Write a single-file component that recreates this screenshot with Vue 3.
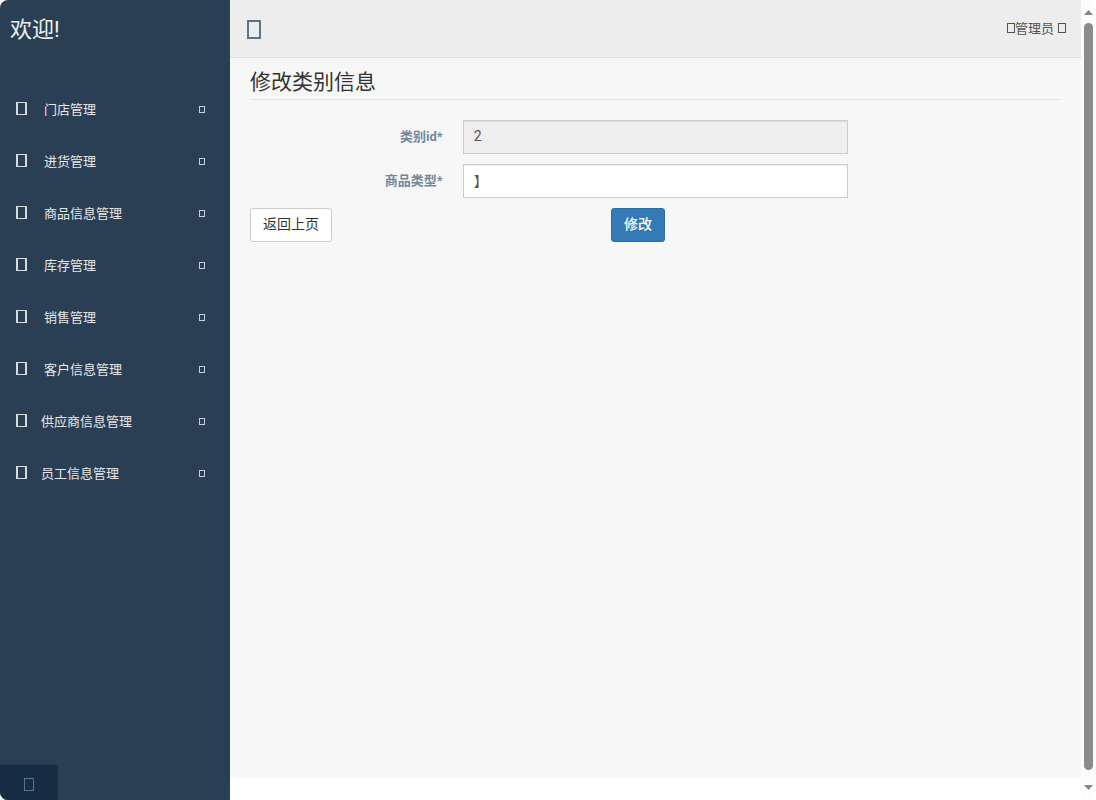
<script setup>
import { ref } from 'vue';

const menu = [
  { name: '门店管理' },
  { name: '进货管理' },
  { name: '商品信息管理' },
  { name: '库存管理' },
  { name: '销售管理' },
  { name: '客户信息管理' },
  { name: '供应商信息管理', tight: true },
  { name: '员工信息管理', tight: true },
];

const categoryId = ref('2');
const categoryName = ref('】');
</script>

<template>
  <div class="window">
    <aside class="sidebar">
      <a href="#" class="brand">欢迎!</a>
      <nav class="menu">
        <a v-for="item in menu" :key="item.name" href="#" class="menu-item" :class="{ tight: item.tight }">
          <i class="box box-menu"></i>
          <span class="menu-name">{{ item.name }}</span>
          <i class="box box-arrow"></i>
        </a>
      </nav>
      <a href="#" class="sidebar-footer" aria-label="退出"><i class="box box-footer"></i></a>
    </aside>

    <div class="main">
      <header class="topbar">
        <button type="button" class="toggle" aria-label="菜单"><i class="box box-toggle"></i></button>
        <a href="#" class="user">
          <i class="box box-user"></i><span>管理员</span><i class="box box-user box-down"></i>
        </a>
      </header>

      <main class="content">
        <h2 class="title">修改类别信息</h2>
        <form @submit.prevent>
          <div class="row">
            <label for="category-id">类别id*</label>
            <div class="field">
              <input id="category-id" v-model="categoryId" type="text" readonly>
            </div>
          </div>
          <div class="row">
            <label for="category-name">商品类型*</label>
            <div class="field">
              <input id="category-name" v-model="categoryName" type="text">
            </div>
          </div>
          <div class="actions">
            <button type="button" class="btn">返回上页</button>
            <button type="submit" class="btn btn-primary">修改</button>
          </div>
        </form>
      </main>
    </div>

    <div class="scrollbar">
      <svg width="9" height="5" viewBox="0 0 9 5"><path d="M4.5 0 9 5H0z" fill="#858585" /></svg>
      <div class="thumb"></div>
      <svg width="9" height="5" viewBox="0 0 9 5"><path d="M0 0h9L4.5 5z" fill="#858585" /></svg>
    </div>
  </div>
</template>

<style>
  body {
    background: #fff;
  }
</style>

<style scoped>
  .window {
    display: flex;
    height: 100vh;
    border-radius: 8px;
    overflow: hidden;
    background: #fff;
    color: #73879c;
    font-family: Roboto, "Noto Sans CJK SC", sans-serif;
    font-size: 13px;
    line-height: 20px;
  }

  .window * {
    box-sizing: border-box;
  }

  a {
    color: inherit;
    text-decoration: none;
  }

  .box {
    display: block;
    flex: none;
    border: 1px solid currentColor;
  }

  /* sidebar */
  .sidebar {
    display: flex;
    flex-direction: column;
    flex: none;
    width: 230px;
    background: #2a3f54;
    color: #e7e7e7;
  }

  .brand {
    height: 58px;
    padding-left: 10px;
    color: #ecf0f1;
    font-size: 22px;
    line-height: 60px;
  }

  .menu {
    flex: 1;
    padding-top: 26px;
  }

  .menu-item {
    display: flex;
    align-items: center;
    height: 52px;
    padding: 0 25px 0 16px;
  }

  .menu-name {
    flex: 1;
    padding-left: 17px;
  }

  .tight .menu-name {
    padding-left: 14px;
  }

  .box-menu {
    width: 11px;
    height: 13px;
    margin-bottom: 3px;
    border-width: 1px 2px 1px 2px;
    color: #d5dadf;
  }

  .box-arrow {
    width: 6px;
    height: 7px;
    margin-bottom: 1px;
    color: #c4cfda;
  }

  .sidebar-footer {
    display: flex;
    align-items: center;
    justify-content: center;
    width: 58px;
    height: 35px;
    padding-top: 3px;
    background: #172d44;
    color: #5a738e;
  }

  .box-footer {
    width: 10px;
    height: 13px;
  }

  /* main column */
  .main {
    display: flex;
    flex-direction: column;
    flex: 1;
    min-width: 0;
    padding-bottom: 22px;
  }

  .topbar {
    display: flex;
    align-items: center;
    justify-content: space-between;
    flex: none;
    height: 58px;
    padding: 0 15px 0 17px;
    border-bottom: 1px solid #d9dee4;
    background: #ededed;
  }

  .toggle {
    padding: 2px 0 0;
    border: none;
    background: none;
    color: #5a738e;
    cursor: pointer;
  }

  .box-toggle {
    width: 14px;
    height: 19px;
    border-width: 2px;
  }

  .user {
    display: flex;
    align-items: center;
    color: #515356;
  }

  .box-user {
    width: 8px;
    height: 10px;
    margin-bottom: 1px;
  }

  .box-down {
    margin-left: 4px;
  }

  .content {
    flex: 1;
    padding: 10px 20px;
    background: #f7f7f7;
  }

  .title {
    margin: 0 0 20px;
    padding-bottom: 3px;
    border-bottom: 1px solid #e6e9ed;
    color: #333;
    font-size: 21px;
    font-weight: 400;
    line-height: 28px;
  }

  .row {
    display: flex;
    margin-bottom: 10px;
  }

  .row label {
    width: 25%;
    padding: 7px 10px 0 0;
    font-weight: 700;
    text-align: right;
  }

  .field {
    width: 50%;
    padding: 0 10px;
  }

  .field input {
    display: block;
    width: 100%;
    height: 34px;
    padding: 5px 10px 7px;
    border: 1px solid #ccc;
    border-radius: 0;
    outline: none;
    background: #fff;
    box-shadow: inset 0 1px 1px rgba(0, 0, 0, 0.075);
    color: #555;
    font-family: inherit;
    font-size: 14px;
  }

  .field input[readonly] {
    background: #eee;
  }

  .actions {
    display: flex;
  }

  .btn {
    height: 34px;
    padding: 0 12px 2px;
    border: 1px solid #ccc;
    border-radius: 3px;
    background: #fff;
    color: #333;
    font-family: inherit;
    font-size: 14px;
    line-height: 20px;
    cursor: pointer;
  }

  .btn-primary {
    margin-left: 34.4%;
    border-color: #2e6da4;
    background: #337ab7;
    color: #fff;
    font-weight: 500;
  }

  /* scrollbar */
  .scrollbar {
    display: flex;
    flex-direction: column;
    align-items: center;
    flex: none;
    width: 15px;
    padding: 10px 0;
    background: #fcfcfc;
  }

  .thumb {
    flex: 1;
    width: 9px;
    margin: 8px 0 15px;
    border-radius: 5px;
    background: #8b8b8b;
  }
</style>
